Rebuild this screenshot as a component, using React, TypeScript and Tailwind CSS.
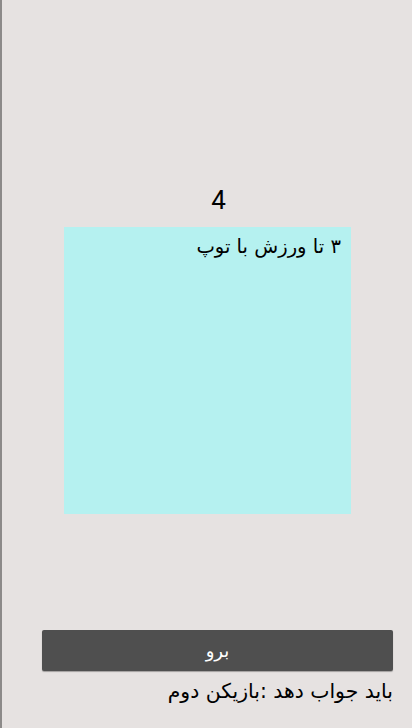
export default function App() {
  return (
    <div
      className="flex h-[728px] w-[412px] flex-col border-l-2 border-[#8c8a89] bg-[#e6e2e1] text-black"
      style={{ fontFamily: '"DejaVu Sans", "Noto Sans", sans-serif' }}
    >
      <div className="mt-[185px] pl-[23px] text-center text-[26px] leading-[31px]" style={{ fontFamily: 'Roboto, sans-serif' }}>
        4
      </div>
      <div className="ml-[62px] mt-[11px] h-[287px] w-[287px] bg-[#b5f1f0]">
        <p dir="rtl" className="pr-[10px] pt-[6px] text-[19.6px] leading-[28px]">
          ۳ تا ورزش با توپ
        </p>
      </div>
      <div className="ml-[40px] mr-[19px] mt-[116px] flex flex-col">
        <button className="h-[41px] rounded-[2px] bg-[#4f4f4f] text-[18px] text-white shadow-[0_1px_1px_rgba(0,0,0,0.3)]">
          برو
        </button>
        <p dir="rtl" className="mt-[5px] text-[20.4px] leading-[30px]">
          باید جواب دهد :بازیکن دوم
        </p>
      </div>
    </div>
  )
}
